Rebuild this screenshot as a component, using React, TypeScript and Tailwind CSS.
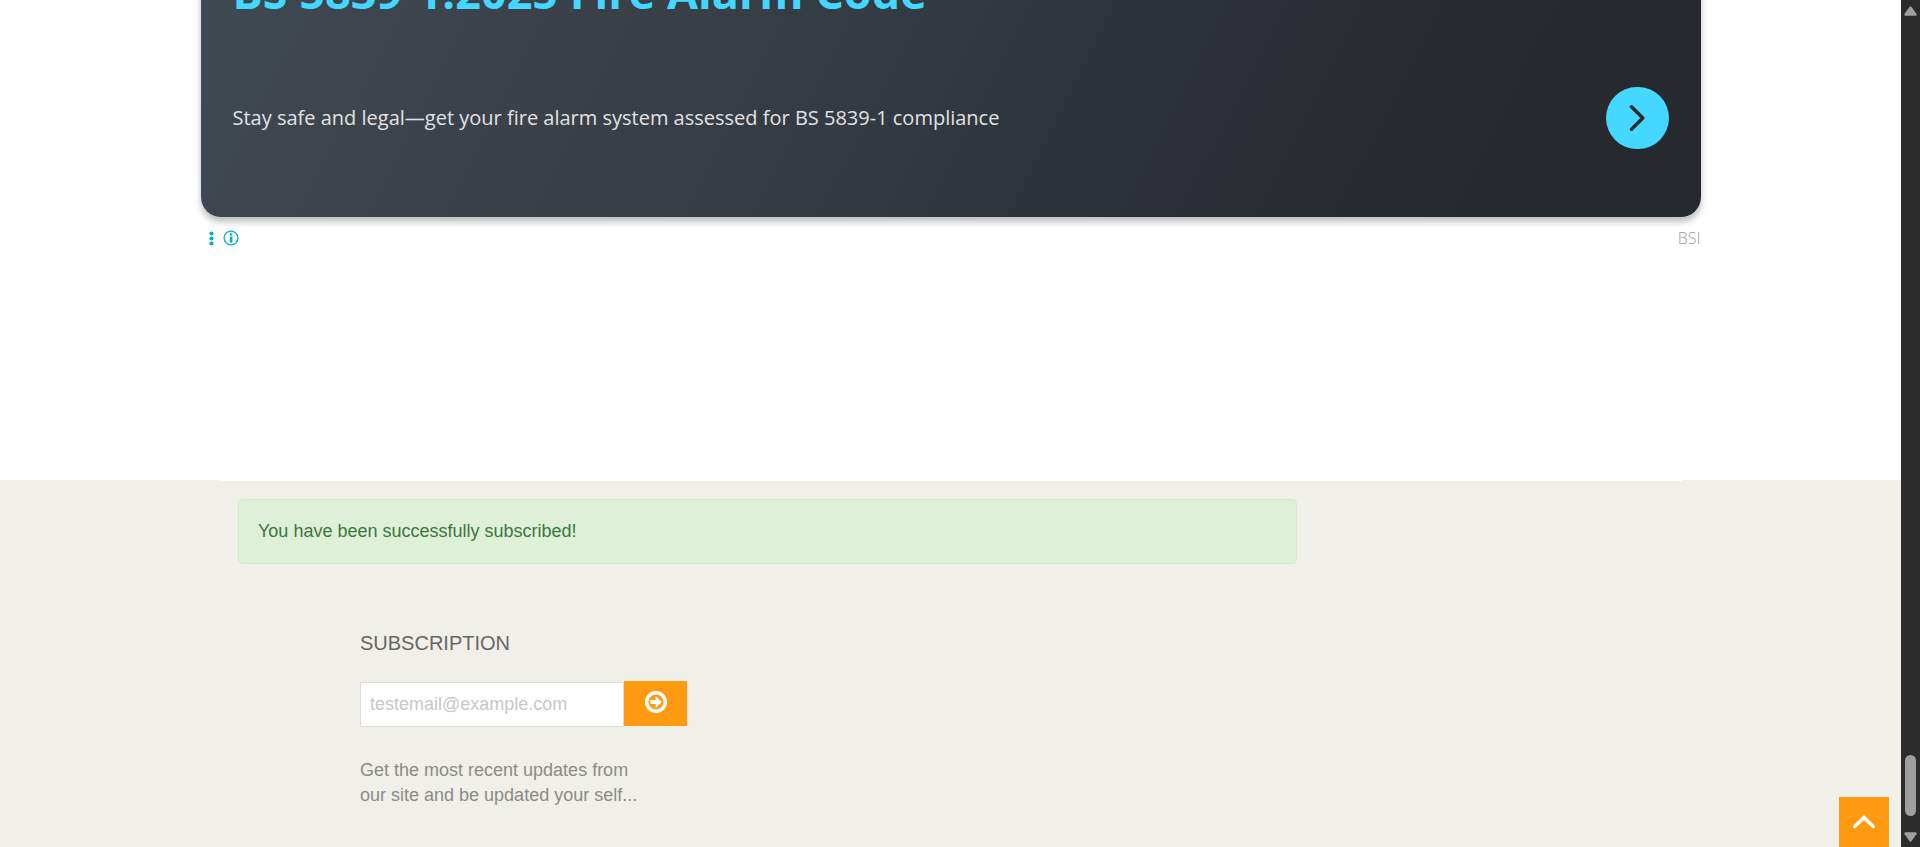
import React from "react";

function AdBanner() {
  return (
    <section aria-label="Advertisement" className="mx-auto -mt-10 w-full max-w-[1500px] font-['Open_Sans','Noto_Sans',sans-serif]">
      <a
        href="#bsi"
        className="block rounded-b-[20px] bg-[linear-gradient(117deg,#3f4a52_0%,#3b424b_20%,#333b42_45%,#2d3138_62%,#282b2f_78%,#26292d_88%)] px-8 pb-[68px] shadow-[0_5px_6px_rgba(0,0,0,0.25)]"
      >
        <h2 className="text-[45px] leading-[64px] font-bold whitespace-nowrap text-[#44d7ff]">BS 5839-1:2025 Fire Alarm Code</h2>
        <div className="mt-[63px] flex items-center justify-between">
          <p className="text-xl text-[#e2e2e2]">Stay safe and legal—get your fire alarm system assessed for BS 5839-1 compliance</p>
          <span className="flex h-[62px] w-[63px] shrink-0 items-center justify-center rounded-full bg-[#44d7ff]">
            <svg width="16" height="28" viewBox="0 0 16 28" fill="none" stroke="#26292d" strokeWidth="3.4" strokeLinecap="round" strokeLinejoin="round">
              <path d="M2.500 2.700 L13.800 14 L2.500 25.300" />
            </svg>
          </span>
        </div>
      </a>
      <div className="mt-[9px] flex items-center justify-between pl-2">
        <div className="flex items-center gap-[9px]">
          <button aria-label="Ad options" className="flex">
            <svg width="5" height="15" viewBox="0 0 5 15" fill="#00aecd">
              <circle cx="2.500" cy="2.500" r="2.100" />
              <circle cx="2.500" cy="7.500" r="2.100" />
              <circle cx="2.500" cy="12.500" r="2.100" />
            </svg>
          </button>
          <button aria-label="About this ad" className="flex">
            <svg width="16" height="16" viewBox="0 0 16 16" fill="#00aecd">
              <circle cx="8" cy="8" r="6.900" fill="none" stroke="#00aecd" strokeWidth="1.300" />
              <rect x="6.800" y="3.400" width="2.600" height="2.200" />
              <rect x="6.800" y="6.600" width="2.600" height="6" />
            </svg>
          </button>
        </div>
        <span className="text-base font-light text-[#9b9b9b]">BSI</span>
      </div>
    </section>
  );
}

function Subscription() {
  return (
    <form className="mt-[63px] ml-[122px] w-[327px]" onSubmit={(e) => e.preventDefault()}>
      <label htmlFor="email" className="block text-xl leading-8 text-[#666]">
        SUBSCRIPTION
      </label>
      <div className="mt-[22px] flex items-start">
        <input
          id="email"
          type="email"
          placeholder="testemail@example.com"
          className="mt-px h-[45px] min-w-0 flex-1 border border-[#ddd] bg-white px-[9px] text-lg text-[#555] outline-none placeholder:text-[#c8c8c2]"
        />
        <button aria-label="Subscribe" className="flex h-[45px] w-[63px] justify-center bg-[#ff9a11] pt-2.5">
          <svg width="22" height="22" viewBox="0 0 22 22" fill="#fff">
            <circle cx="11" cy="11" r="9.300" fill="none" stroke="#fff" strokeWidth="3.400" />
            <path d="M5.300 8.900h5.300V5.700q0-.6.6-.2l5.200 5q.5.500 0 1l-5.200 5q-.6.400-.6-.2v-3.200H5.300z" />
          </svg>
        </button>
      </div>
      <p className="mt-[31px] text-lg leading-[25px] text-[#8b8b88]">
        Get the most recent updates from
        <br />
        our site and be updated your self...
      </p>
    </form>
  );
}

function ScrollBar() {
  return (
    <div aria-hidden="true" className="flex w-[19px] shrink-0 flex-col items-center bg-[#2c2c2c] pt-1.5 pb-[5px]">
      <svg width="13" height="10" viewBox="0 0 13 10" fill="#9f9f9f">
        <path d="M5.600.8q.9-1 1.800 0l5 7q.7 2-1 2H1.600q-1.700 0-1-2z" />
      </svg>
      <div className="mt-auto h-[61px] w-[11px] rounded-full bg-[#9f9f9f]" />
      <svg className="mt-4" width="13" height="10" viewBox="0 0 13 10" fill="#9f9f9f">
        <path d="M5.600 9.200q.9 1 1.800 0l5-7q.7-2-1-2H1.600q-1.700 0-1 2z" />
      </svg>
    </div>
  );
}

export default function App() {
  return (
    <div className="flex h-screen overflow-hidden bg-white font-['Liberation_Sans',Arial,sans-serif]">
      <div className="flex min-w-0 flex-1 flex-col">
        <main className="h-[480px] shrink-0">
          <AdBanner />
        </main>
        <footer className="flex-1 bg-[#f0f0e8]">
          <div className="mx-auto max-w-[1463px] border-t border-white px-[19px] pt-[18px]">
            <div role="status" className="w-full max-w-[1059px] rounded-[5px] border border-[#d6e9c6] bg-[#def0d8] px-[19px] py-[19px] text-lg leading-[25px] text-[#3c763d]">
              You have been successfully subscribed!
            </div>
            <Subscription />
          </div>
        </footer>
      </div>
      <button aria-label="Back to top" className="fixed right-[31px] bottom-0 flex size-[50px] items-center justify-center bg-[#ff9a11]">
        <svg width="24" height="14" viewBox="0 0 24 14" fill="none" stroke="#fff" strokeWidth="3.400" strokeLinecap="round">
          <path d="M2.800 11.500 L12 2.500 L21.200 11.500" />
        </svg>
      </button>
      <ScrollBar />
    </div>
  );
}
